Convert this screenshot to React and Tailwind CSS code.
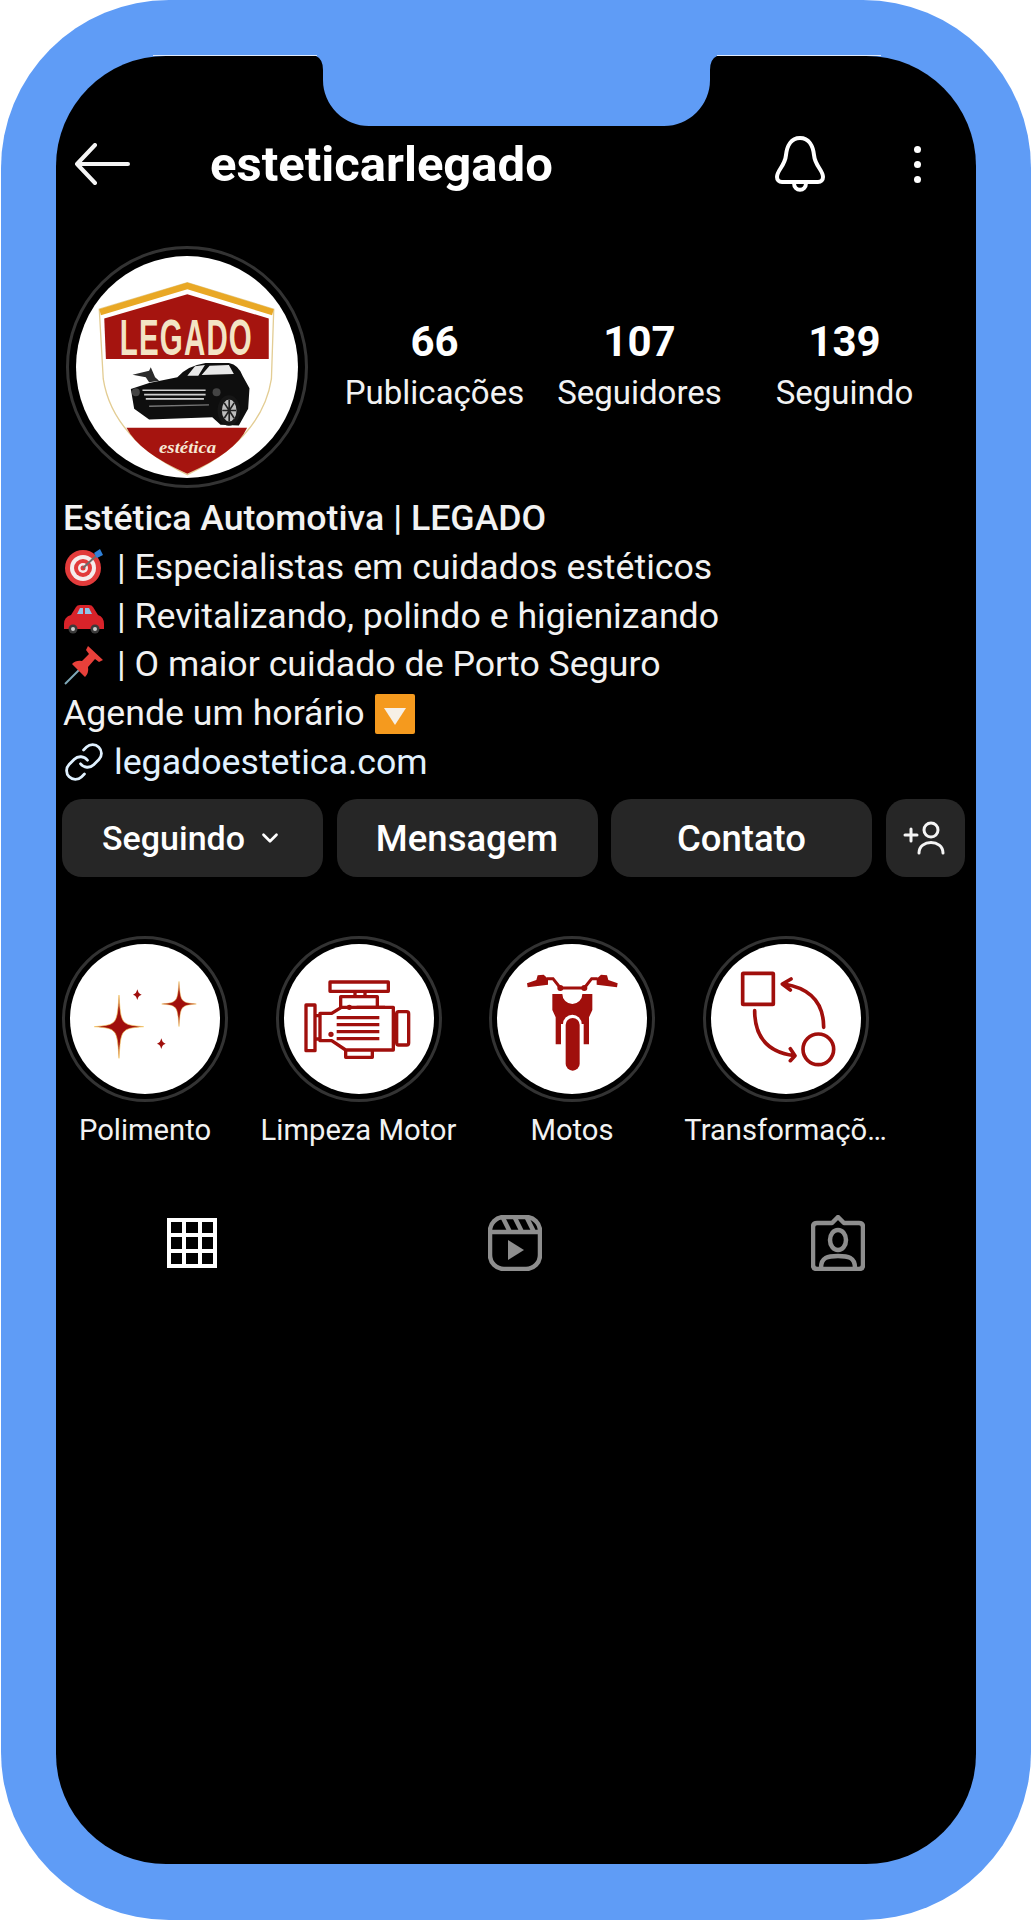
import React from "react";
import { ChevronDown, Link as LinkIcon } from "lucide-react";

const RED = "#a00f0c";

const star = (cx, cy, rx, ry, e) => {
  const ur = `${cx + e} ${cy - e} ${cx + e} ${cy - e}`;
  const dr = `${cx + e} ${cy + e} ${cx + e} ${cy + e}`;
  const dl = `${cx - e} ${cy + e} ${cx - e} ${cy + e}`;
  const ul = `${cx - e} ${cy - e} ${cx - e} ${cy - e}`;
  return `M${cx} ${cy - ry}C${ur} ${cx + rx} ${cy}C${dr} ${cx} ${cy + ry}C${dl} ${cx - rx} ${cy}C${ul} ${cx} ${cy - ry}Z`;
};

const Logo = () => (
  <svg viewBox="80 80 668 668" className="w-full h-full">
    <path d="M150 240L415 160L675 240L668 450Q640 630 415 738Q190 630 162 450Z" fill="#fff" stroke="#e3cd94" strokeWidth="4" />
    <path d="M150 240L415 160L675 240L670 258L415 180L155 258Z" fill="#e9a825" />
    <path d="M165 268L415 195L660 268V390H170Z" fill="#a5140f" />
    <text transform="translate(212 378) scale(0.58 1)" fontFamily="'Liberation Sans', sans-serif" fontWeight="700" fontSize="153" letterSpacing="6" fill="#f3e4c4">LEGADO</text>
    <path d="M232 597H595Q560 672 415 735Q270 672 232 597Z" fill="#a5140f" />
    <text x="330" y="674" fontFamily="'Liberation Serif', serif" fontStyle="italic" fontWeight="700" fontSize="52" fill="#f6e8d4" textLength="172" lengthAdjust="spacingAndGlyphs">estética</text>
    <path d="M245 480L300 462L385 445Q415 410 470 402L540 402Q570 408 582 442L602 478L598 540L570 590L515 588L490 565L300 572L255 540Z" fill="#0e0e0e" />
    <path d="M250 437L300 425L305 415L318 445L330 455L300 460L290 445Z" fill="#2b2b2b" />
    <path d="M415 440L438 412L468 408L448 440ZM458 438L482 410L540 408L555 435Z" fill="#e8e8e8" />
    <path d="M280 484H470M285 497H470M290 510H465" stroke="#cfcfcf" strokeWidth="5" />
    <path d="M300 532L480 528" stroke="#777" strokeWidth="4" />
    <circle cx="260" cy="490" r="12" fill="#444" />
    <circle cx="503" cy="490" r="12" fill="#444" />
    <ellipse cx="540" cy="545" rx="34" ry="46" fill="#161616" />
    <ellipse cx="541" cy="545" rx="22" ry="33" fill="#bdbdbd" />
    <path d="M541 512V578M520 545H562M526 522L556 568M556 522L526 568" stroke="#222" strokeWidth="5" />
  </svg>
);

const Sparkles = () => (
  <svg viewBox="0 0 450 450" className="w-full h-full">
    <path d={star(147, 248, 74, 95, 6)} fill={RED} stroke="#f3c45a" strokeWidth="2" />
    <path d={star(327, 180, 52, 68, 5)} fill={RED} stroke="#f3c45a" strokeWidth="1.5" />
    <path d={star(202, 152, 13, 16, 4)} fill={RED} />
    <path d={star(274, 299, 13, 16, 4)} fill={RED} />
  </svg>
);

const Engine = () => (
  <svg viewBox="0 0 450 450" className="w-full h-full" fill="none" stroke={RED} strokeWidth="10" strokeLinejoin="round">
    <rect x="138" y="114" width="175" height="28" />
    <path d="M213 142V158H243V142M170 190V158H280V190" />
    <path d="M108 208H143L172 190H328V318H185L143 290H108Z" />
    <rect x="66" y="183" width="27" height="137" />
    <path d="M93 215H108M93 285H108" />
    <path d="M328 230H338M328 280H338" />
    <rect x="338" y="203" width="36" height="100" rx="6" />
    <path d="M185 320V340H265V320" />
    <path d="M218 190H303M158 221H286M158 242H286M158 263H286M158 284H286" />
    <circle cx="196" cy="190" r="3" fill={RED} />
    <circle cx="141" cy="271" r="3" fill={RED} />
  </svg>
);

const Moto = () => (
  <svg viewBox="0 0 450 450" className="w-full h-full">
    <path d="M90 118L118 108L122 94L140 92L153 104L153 122L92 130Z" fill={RED} />
    <path d="M362 118L334 108L330 94L312 92L299 104L299 122L360 130Z" fill={RED} />
    <path d="M150 104H168L190 132H262L284 104H302" fill="none" stroke={RED} strokeWidth="9" />
    <circle cx="190" cy="132" r="9" fill={RED} />
    <circle cx="262" cy="132" r="9" fill={RED} />
    <path d="M166 150H196A30 30 0 0 0 256 150H286V198L276 220V301H260V240H192V301H176V220L166 198Z" fill={RED} />
    <rect x="198" y="212" width="56" height="170" rx="28" fill="#fff" />
    <rect x="206" y="222" width="42" height="158" rx="21" fill={RED} />
  </svg>
);

const Transform = () => (
  <svg viewBox="0 0 450 450" className="w-full h-full" fill="none" stroke={RED} strokeWidth="11" strokeLinecap="round" strokeLinejoin="round">
    <rect x="95" y="88" width="92" height="93" rx="2" />
    <circle cx="322" cy="316" r="46" />
    <path d="M338 250Q338 140 220 120M240 105L214 120L238 138" />
    <path d="M131 200Q131 320 250 335M238 314L252 335L238 350" />
  </svg>
);

const Target = () => (
  <svg viewBox="0 0 40 40" className="w-[40px] h-[40px]">
    <circle cx="19" cy="21" r="18" fill="#e23b3b" />
    <circle cx="19" cy="21" r="13" fill="#f5eded" />
    <circle cx="19" cy="21" r="9" fill="#e23b3b" />
    <circle cx="19" cy="21" r="5" fill="#f5eded" />
    <circle cx="19" cy="21" r="2.5" fill="#e23b3b" />
    <path d="M19 21L33 8" stroke="#6d6d6d" strokeWidth="2" />
    <path d="M30 6L36 2L39 8L33 11Z" fill="#2f80d8" />
  </svg>
);

const Car = () => (
  <svg viewBox="0 0 42 40" className="w-[42px] h-[40px]">
    <path d="M1 28Q1 21 8 19L13 11Q14 9 17 9H26Q29 9 30 11L35 19Q41 21 41 28V33H1Z" fill="#d8232a" />
    <path d="M14 18L17 12H20V18ZM22 12H26L29 18H22Z" fill="#8fc3e8" />
    <circle cx="10" cy="33" r="4.5" fill="#3a3a3a" />
    <circle cx="32" cy="33" r="4.5" fill="#3a3a3a" />
    <circle cx="10" cy="33" r="2" fill="#ccc" />
    <circle cx="32" cy="33" r="2" fill="#ccc" />
  </svg>
);

const Pin = () => (
  <svg viewBox="0 0 40 40" className="w-[40px] h-[40px]">
    <path d="M16 24L1 39" stroke="#7fa8b8" strokeWidth="2" />
    <path d="M24 1L39 15L35 17L31 14L24 22Q25 28 21 32L8 19Q12 15 18 16L25 9L22 5Z" fill="#e8403a" />
  </svg>
);

const DownBox = () => (
  <svg viewBox="0 0 40 40" className="w-[40px] h-[40px] shrink-0">
    <rect width="40" height="40" rx="2" fill="#f59a1e" />
    <path d="M9 14H31L20 31Z" fill="#f6f0e6" />
  </svg>
);

const highlights = [
  { name: "Polimento", Icon: Sparkles },
  { name: "Limpeza Motor", Icon: Engine },
  { name: "Motos", Icon: Moto },
  { name: "Transformaçõ…", Icon: Transform },
];

const stats = [
  ["66", "Publicações"],
  ["107", "Seguidores"],
  ["139", "Seguindo"],
];

const bioLines = [
  [Target, "| Especialistas em cuidados estéticos"],
  [Car, "| Revitalizando, polindo e higienizando"],
  [Pin, "| O maior cuidado de Porto Seguro"],
];

export default function App() {
  return (
    <div className="w-[1032px] h-[1920px] bg-white px-[1px] font-['Roboto',sans-serif]">
      <div className="relative w-[1030px] h-[1920px] bg-[#5f9cf6] rounded-[168px] pl-[55px] pr-[55px] py-[56px]">
        <div className="relative h-full bg-black rounded-[110px] text-[#f2f2f2] overflow-hidden">
          <header className="flex items-center mt-[78px] h-[60px]">
            <svg viewBox="0 0 56 42" className="ml-[18px] w-[56px] h-[42px]" fill="none" stroke="#f5f5f5" strokeWidth="4" strokeLinecap="round" strokeLinejoin="round">
              <path d="M54 21H3M21 2L3 21L21 40" />
            </svg>
            <h1 className="ml-[80px] text-[49px] font-bold leading-none text-white whitespace-nowrap">esteticarlegado</h1>
            <svg viewBox="0 0 50 56" className="ml-[222px] w-[50px] h-[56px]" fill="none" stroke="#fff" strokeWidth="4" strokeLinejoin="round">
              <path d="M25 2C34 2 38 10 39 19C40 30 48 34 48 41C48 44 46 46 43 46H7C4 46 2 44 2 41C2 34 10 30 11 19C12 10 16 2 25 2Z" />
              <path d="M19 47C19 56 31 56 31 47" />
            </svg>
            <div className="ml-[89px] flex flex-col gap-[8px]">
              <span className="w-[7px] h-[7px] rounded-full bg-white" />
              <span className="w-[7px] h-[7px] rounded-full bg-white" />
              <span className="w-[7px] h-[7px] rounded-full bg-white" />
            </div>
          </header>

          <section className="flex items-center mt-[52px] ml-[10px]">
            <div className="w-[242px] h-[242px] rounded-full border-[3px] border-[#333] flex items-center justify-center shrink-0">
              <div className="w-[222px] h-[222px] rounded-full bg-white overflow-hidden">
                <Logo />
              </div>
            </div>
            <div className="flex ml-[24px]">
              {stats.map(([n, label]) => (
                <div key={label} className="w-[205px] text-center">
                  <div className="text-[42px] font-bold leading-[52px] text-white">{n}</div>
                  <div className="text-[33px] leading-[50px]">{label}</div>
                </div>
              ))}
            </div>
          </section>

          <section className="mt-[6px] ml-[7px] text-[35.7px] leading-[48.8px]">
            <p className="font-medium">Estética Automotiva | LEGADO</p>
            {bioLines.map(([Emoji, text]) => (
              <p key={text} className="flex items-center gap-[12px]">
                <span className="w-[42px] flex justify-center shrink-0">
                  <Emoji />
                </span>
                <span>{text}</span>
              </p>
            ))}
            <p className="flex items-center gap-[10px]">
              <span>Agende um horário</span>
              <DownBox />
            </p>
            <p className="flex items-center gap-[9px] text-[#e0f1ff]">
              <LinkIcon size={42} strokeWidth={1.6} />
              <span>legadoestetica.com</span>
            </p>
          </section>

          <section className="flex gap-[13.5px] mt-[12.5px] ml-[6px] h-[78px]">
            <button className="w-[261px] rounded-[20px] bg-[#262626] flex items-center justify-center gap-[12px] text-[34px] font-medium text-white">
              Seguindo <ChevronDown size={26} strokeWidth={2.5} />
            </button>
            <button className="w-[261px] pt-[3px] rounded-[20px] bg-[#262626] text-[36.5px] font-medium text-white">Mensagem</button>
            <button className="w-[261px] pt-[3px] rounded-[20px] bg-[#262626] text-[36.5px] font-medium text-white">Contato</button>
            <button className="w-[79px] rounded-[20px] bg-[#262626] flex items-center justify-center">
              <svg viewBox="0 0 44 34" className="w-[44px] h-[34px]" fill="none" stroke="#f5f5f5" strokeWidth="3" strokeLinecap="round">
                <path d="M2 14H14M8 8V20" />
                <circle cx="28" cy="9" r="7" />
                <path d="M16 32C16 18 40 18 40 32" />
              </svg>
            </button>
          </section>

          <section className="flex gap-[47.5px] mt-[59px] ml-[6px]">
            {highlights.map(({ name, Icon }) => (
              <div key={name} className="w-[166px] flex flex-col items-center">
                <div className="w-[166px] h-[166px] rounded-full border-[3px] border-[#333] flex items-center justify-center">
                  <div className="w-[150px] h-[150px] rounded-full bg-white overflow-hidden">
                    <Icon />
                  </div>
                </div>
                <div className="mt-[10px] text-[29.2px] leading-[36px] whitespace-nowrap">{name}</div>
              </div>
            ))}
          </section>

          <nav className="flex mt-[66px] h-[58px] items-center">
            <svg viewBox="0 0 50 50" className="ml-[111px] w-[50px] h-[50px]" fill="none" stroke="#fff" strokeWidth="4">
              <rect x="2" y="2" width="46" height="46" />
              <path d="M17 2V48M33 2V48M2 17H48M2 33H48" />
            </svg>
            <svg viewBox="0 0 54 56" className="ml-[271px] w-[54px] h-[56px]" fill="none" stroke="#8e8e8e" strokeWidth="4.5" strokeLinejoin="round">
              <rect x="2" y="2" width="50" height="52" rx="14" />
              <path d="M2 17H52M15 3L22 17M27 3L34 17M39 3L46 17" />
              <path d="M20 25L36 35L20 45Z" fill="#8e8e8e" stroke="none" />
            </svg>
            <svg viewBox="0 0 54 56" className="ml-[269px] w-[54px] h-[56px]" fill="none" stroke="#8e8e8e" strokeWidth="4.5" strokeLinejoin="round">
              <path d="M6 8H21L27 2L33 8H48Q52 8 52 12V50Q52 54 48 54H6Q2 54 2 50V12Q2 8 6 8Z" />
              <ellipse cx="27" cy="25" rx="8" ry="10" />
              <path d="M10 53C10 42 17 41 27 41C37 41 44 42 44 53" />
            </svg>
          </nav>
        </div>

        <svg viewBox="0 0 401 70" className="absolute left-[315px] top-[56px] w-[401px] h-[70px]" fill="#5f9cf6">
          <path d="M0 0Q7 3 7 14V24A46 46 0 0 0 53 70H348A46 46 0 0 0 394 24V14Q394 3 401 0Z" />
        </svg>
        <span className="absolute left-[152px] top-[55px] w-[164px] h-px bg-white/80" />
        <span className="absolute left-[716px] top-[55px] w-[164px] h-px bg-white/80" />
      </div>
    </div>
  );
}
